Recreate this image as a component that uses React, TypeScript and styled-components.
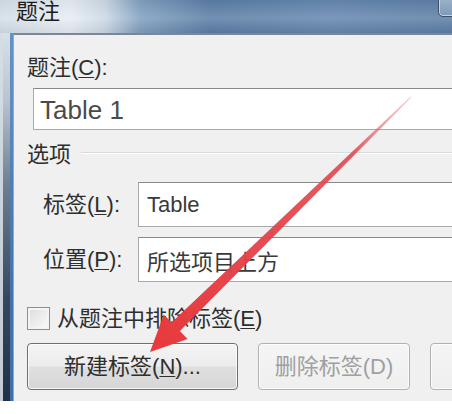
import React from "react";
import styled, { createGlobalStyle } from "styled-components";

const Global = createGlobalStyle`
  html, body { margin: 0; padding: 0; background: #ffffff; }
  body { width: 452px; height: 414px; overflow: hidden; }
`;

const FONT = `"Liberation Sans", "Noto Sans CJK SC", sans-serif`;

const Window = styled.div`
  position: relative;
  width: 452px;
  height: 401px;
  overflow: hidden;
  display: flex;
  flex-direction: column;
  font-family: ${FONT};
  color: #2e2e2e;
`;

const TitleBar = styled.div`
  height: 33px;
  flex: none;
  display: flex;
  align-items: flex-start;
  justify-content: space-between;
  padding-left: 16px;
  background:
    linear-gradient(180deg, rgba(0, 0, 0, 0.04) 0, rgba(255, 255, 255, 0.14) 55%, rgba(0, 0, 0, 0.06) 100%),
    linear-gradient(90deg, #d3dee8 0, #e6edf3 70px, #cbd8e4 105px, #81a0c0 140px, #5a7da5 210px, #6587ae 330px, #5c7ea5 452px);
`;

const Title = styled.span`
  font-size: 22px;
  line-height: 24px;
  margin-top: 0;
  color: #1c1c1c;
`;

const CloseButton = styled.div`
  width: 40px;
  height: 19px;
  flex: none;
  margin-top: -4px;
  margin-right: -28px;
  border: 1px solid #3e5066;
  border-radius: 0 0 5px 5px;
  background: linear-gradient(180deg, #9fb4ca, #7d99b8);
  box-shadow: inset 0 0 0 1px rgba(255, 255, 255, 0.55);
`;

const Body = styled.div`
  flex: 1;
  display: flex;
  min-height: 0;
`;

const SideFrame = styled.div`
  width: 13px;
  flex: none;
  background:
    linear-gradient(90deg, rgba(214, 220, 226, 0.9) 0 3px, transparent 3px 10px, rgba(72, 126, 192, 0.8) 10px 13px),
    linear-gradient(180deg, #d6e1ea 0, #b9c5d0 18%, #6d7d8f 42%, #36485f 72%, #1f3049 100%);
`;

const Content = styled.div`
  flex: 1;
  min-width: 0;
  background: #f0f0f0;
  border-left: 1px solid #9da5ad;
  border-top: 2px solid #7b8796;
  padding: 20px 0 0 13px;
  display: flex;
  flex-direction: column;
`;

const Label = styled.div`
  font-size: 22px;
  line-height: 26px;
  white-space: nowrap;
  color: #2e2e2e;
`;

const Key = styled.span`
  text-decoration: underline;
  text-decoration-thickness: 1px;
  text-underline-offset: 2px;
`;

const CaptionField = styled.div`
  height: 42px;
  box-sizing: border-box;
  margin: 7px -60px 0 6px;
  padding-left: 6px;
  display: flex;
  align-items: center;
  padding-top: 2px;
  background: #ffffff;
  border: 1px solid #a9a9a9;
  border-top-color: #8a8a8a;
  font-size: 26px;
  color: #4a4a4a;
`;

const GroupHeader = styled.div`
  display: flex;
  align-items: center;
  gap: 10px;
  margin-top: 12px;
`;

const GroupLine = styled.div`
  flex: 1;
  height: 1px;
  margin-top: -6px;
  margin-right: -60px;
  background: #d3dbe1;
  box-shadow: 0 1px 0 #ffffff;
`;

const FieldGrid = styled.div`
  display: grid;
  grid-template-columns: 95px 1fr;
  row-gap: 10px;
  align-items: center;
  padding-left: 16px;
  margin-top: 14px;
  margin-right: -60px;
`;

const ValueField = styled.div`
  height: 45px;
  box-sizing: border-box;
  padding-left: 8px;
  display: flex;
  align-items: center;
  background: #ffffff;
  border: 1px solid #a9a9a9;
  border-top-color: #8a8a8a;
  font-size: 22px;
  color: #3a3a3a;
`;

const CheckRow = styled.label`
  display: flex;
  align-items: center;
  gap: 7px;
  height: 23px;
  margin-top: 25px;
`;

const CheckBox = styled.span`
  width: 23px;
  height: 23px;
  box-sizing: border-box;
  flex: none;
  border: 1px solid #8e8f8f;
  background: linear-gradient(135deg, #dcdcdc 0%, #ececec 50%, #fbfbfb 100%);
  box-shadow: inset 0 0 0 2px #f4f4f4;
`;

const ButtonRow = styled.div`
  display: flex;
  gap: 20px;
  margin-top: 13px;
`;

const Button = styled.button<{ $w: number; $disabled?: boolean }>`
  all: unset;
  box-sizing: border-box;
  flex: none;
  width: ${(p) => p.$w}px;
  height: 47px;
  display: flex;
  align-items: center;
  justify-content: center;
  border-radius: 4px;
  border: 1px solid ${(p) => (p.$disabled ? "#adb2b5" : "#707070")};
  background: ${(p) =>
    p.$disabled
      ? "linear-gradient(180deg, #f5f5f5 0%, #efefef 100%)"
      : "linear-gradient(180deg, #f4f4f4 0%, #ececec 48%, #dfdfdf 52%, #d6d6d6 100%)"};
  box-shadow: inset 0 0 0 1px rgba(255, 255, 255, 0.75);
  font-family: ${FONT};
  font-size: 22px;
  line-height: 26px;
  color: ${(p) => (p.$disabled ? "#a0a0a0" : "#2e2e2e")};
  white-space: nowrap;
`;

const ArrowLayer = styled.svg`
  position: absolute;
  left: 0;
  top: 0;
  pointer-events: none;
`;

function Arrow() {
  return (
    <ArrowLayer width={452} height={414} viewBox="0 0 452 414">
      <defs>
        <linearGradient id="shaft" gradientUnits="userSpaceOnUse" x1="411" y1="97" x2="150" y2="352">
          <stop offset="0" stopColor="#d98a90" stopOpacity="0.35" />
          <stop offset="0.22" stopColor="#df4a52" stopOpacity="0.9" />
          <stop offset="1" stopColor="#e8383c" stopOpacity="1" />
        </linearGradient>
        <filter id="soft" x="-10%" y="-10%" width="120%" height="120%">
          <feGaussianBlur stdDeviation="0.6" />
        </filter>
      </defs>
      <polygon
        filter="url(#soft)"
        fill="url(#shaft)"
        points="410.6,96.6 171.5,322.5 163.8,314.6 150,352 187.6,339 179.9,331.1 411.4,97.4"
      />
    </ArrowLayer>
  );
}

export default function App() {
  return (
    <>
      <Global />
      <Window>
        <TitleBar>
          <Title>题注</Title>
          <CloseButton />
        </TitleBar>
        <Body>
          <SideFrame />
          <Content>
            <Label>
              题注(<Key>C</Key>):
            </Label>
            <CaptionField>Table 1</CaptionField>
            <GroupHeader>
              <Label>选项</Label>
              <GroupLine />
            </GroupHeader>
            <FieldGrid>
              <Label>
                标签(<Key>L</Key>):
              </Label>
              <ValueField>Table</ValueField>
              <Label>
                位置(<Key>P</Key>):
              </Label>
              <ValueField>所选项目上方</ValueField>
            </FieldGrid>
            <CheckRow>
              <CheckBox />
              <Label>
                从题注中排除标签(<Key>E</Key>)
              </Label>
            </CheckRow>
            <ButtonRow>
              <Button $w={211}>
                新建标签(<Key>N</Key>)...
              </Button>
              <Button $w={152} $disabled>
                删除标签(D)
              </Button>
              <Button $w={150} $disabled />
            </ButtonRow>
          </Content>
        </Body>
        <Arrow />
      </Window>
    </>
  );
}
